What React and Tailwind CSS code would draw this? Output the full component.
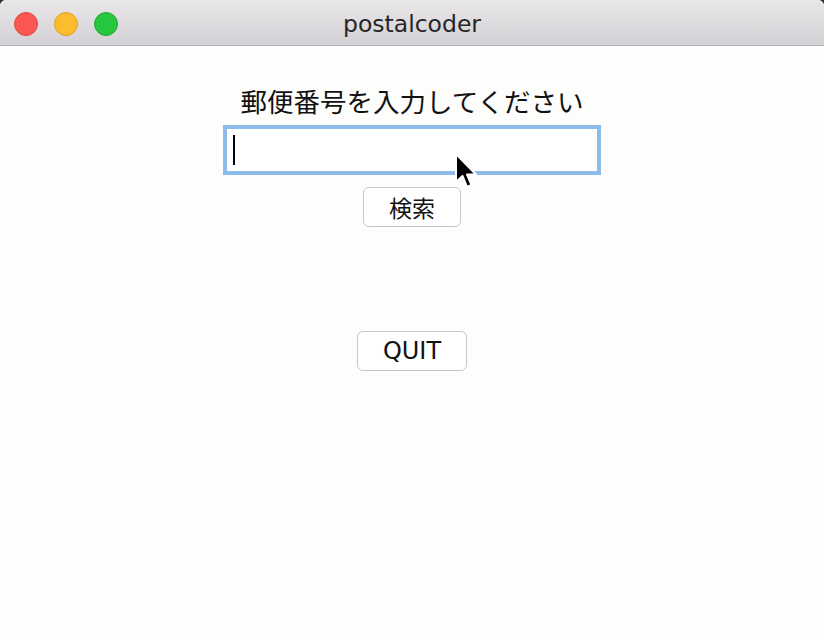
import React from "react";

function TrafficLight({ color, border }) {
  return (
    <div
      className={`w-[24px] h-[24px] rounded-full border ${color} ${border}`}
    />
  );
}

function Pointer() {
  return (
    <svg
      className="absolute left-[452px] top-[150px]"
      width="28"
      height="42"
      viewBox="0 0 28 42"
    >
      <path
        d="M4 4 L4 32 L10.5 26 L15 37 L19.5 35 L15 24.5 L24 24.5 Z"
        fill="#000"
        stroke="#fff"
        strokeWidth="2"
        strokeLinejoin="round"
      />
    </svg>
  );
}

export default function App() {
  return (
    <div className="w-[824px] h-[640px] bg-[#2d3320] overflow-hidden">
      <div className="relative w-full h-full rounded-t-[6px] overflow-hidden bg-[#fdfdfb] flex flex-col">
        <div className="h-[46px] shrink-0 relative flex items-center bg-gradient-to-b from-[#e9e7e9] to-[#d3d1d5] border-b border-[#b4b2b6]">
          <div className="flex items-center gap-[16px] pl-[14px] pt-[2px]">
            <TrafficLight color="bg-[#fc5753]" border="border-[#de4743]" />
            <TrafficLight color="bg-[#fdbc2e]" border="border-[#dea123]" />
            <TrafficLight color="bg-[#27c63f]" border="border-[#1ea932]" />
          </div>
          <div className="absolute inset-0 flex items-center justify-center pointer-events-none pt-[4px]">
            <span
              className="text-[23.5px] text-[#262626] leading-none"
              style={{ fontFamily: '"DejaVu Sans", sans-serif' }}
            >
              postalcoder
            </span>
          </div>
        </div>

        <div className="flex flex-col items-center pt-[39px]">
          <div
            className="text-[26.5px] leading-[32px] text-[#111]"
            style={{ fontFamily: '"Noto Sans CJK JP", sans-serif' }}
          >
            郵便番号を入力してください
          </div>

          <div className="relative mt-2 w-[378px] h-[50px] border-[4px] border-[#8dbbea] bg-white">
            <div className="absolute left-[6px] top-[6px] w-[2px] h-[30px] bg-black" />
          </div>

          <button
            className="mt-[12px] w-[98px] h-[40px] rounded-[6px] border border-[#c6c6c2] bg-white text-[23px] text-[#111] leading-none"
            style={{ fontFamily: '"Noto Sans CJK JP", sans-serif' }}
          >
            検索
          </button>

          <button
            className="mt-[104px] w-[110px] h-[40px] rounded-[6px] border border-[#c6c6c2] bg-white text-[24px] text-[#111] leading-none"
            style={{ fontFamily: '"DejaVu Sans", sans-serif' }}
          >
            QUIT
          </button>
        </div>

        <Pointer />
      </div>
    </div>
  );
}
